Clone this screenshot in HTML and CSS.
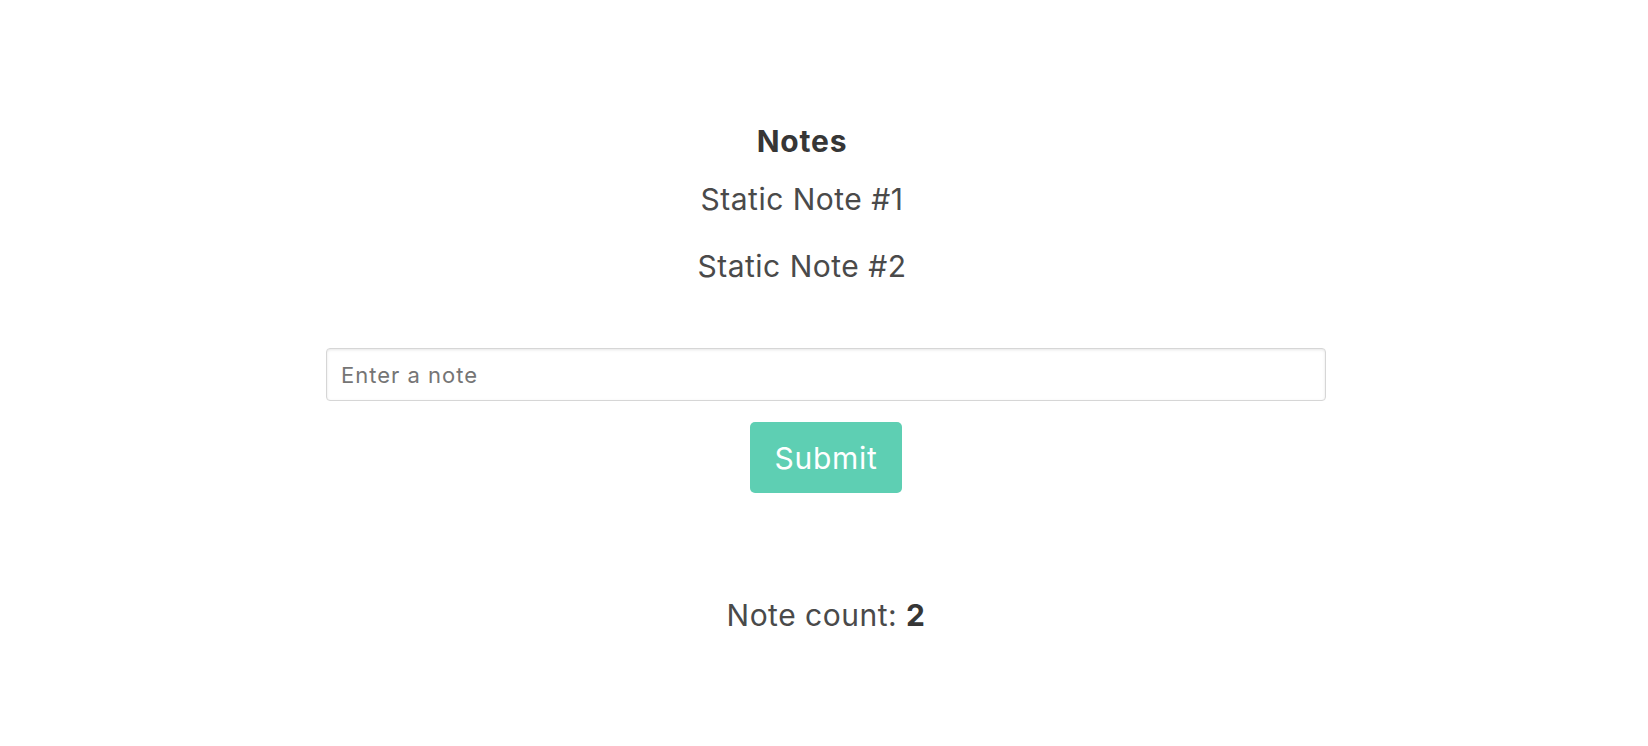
FILE: index.html
```html
<!DOCTYPE html>
<html lang="en">
<head>
<meta charset="utf-8">
<title>Notes</title>
<link rel="stylesheet" href="styles.css">
</head>
<body>
<main class="app">
  <section class="notes">
    <h1 class="notes-title">Notes</h1>
    <p class="note note-first">Static Note #1</p>
    <p class="note note-second">Static Note #2</p>
  </section>
  <form class="note-form">
    <input class="note-input" type="text" placeholder="Enter a note">
    <button class="submit-btn" type="button">Submit</button>
  </form>
  <p class="note-count">Note count: <strong>2</strong></p>
</main>
</body>
</html>
```
FILE: styles.css
```css
html, body {
  margin: 0;
  padding: 0;
  background: #ffffff;
}

body {
  font-family: Inter, "Liberation Sans", sans-serif;
  color: #4a4a4a;
}

.app {
  width: 1000px;
  margin: 0 auto;
  padding: 123px 0 0 4px;
  display: flex;
  flex-direction: column;
  align-items: stretch;
}

.notes {
  display: flex;
  flex-direction: column;
  align-items: center;
  padding-right: 48px;
}

.notes-title {
  margin: 0;
  font-size: 30px;
  line-height: 36px;
  font-weight: 700;
  letter-spacing: 0.8px;
  color: #363636;
}

.note {
  margin: 0;
  font-size: 30px;
  line-height: 36px;
  font-weight: 400;
  letter-spacing: 0.5px;
}

.note-first {
  margin-top: 22px;
}

.note-second {
  margin-top: 31px;
}

.note-form {
  margin-top: 64px;
  display: flex;
  flex-direction: column;
  align-items: center;
  gap: 21px;
}

.note-input {
  box-sizing: border-box;
  width: 1000px;
  height: 53px;
  padding: 0 14px;
  border: 1.5px solid #d6d6d6;
  border-radius: 4px;
  box-shadow: inset 0 1px 3px rgba(10, 10, 10, 0.1);
  font-family: Inter, "Liberation Sans", sans-serif;
  font-size: 22px;
  letter-spacing: 1px;
  color: #363636;
  outline: none;
}

.note-input::placeholder {
  color: #757575;
}

.submit-btn {
  box-sizing: border-box;
  height: 71px;
  padding: 0 25px;
  border: none;
  border-radius: 5px;
  background: #5ecfb3;
  color: #ffffff;
  font-family: Inter, "Liberation Sans", sans-serif;
  font-size: 30px;
  letter-spacing: 0.7px;
  line-height: 1;
  display: inline-flex;
  align-items: center;
  justify-content: center;
}

.note-count {
  margin: 104px 0 0;
  text-align: center;
  font-size: 30px;
  line-height: 36px;
  letter-spacing: 0.5px;
}

.note-count strong {
  font-weight: 700;
  color: #363636;
}
```
